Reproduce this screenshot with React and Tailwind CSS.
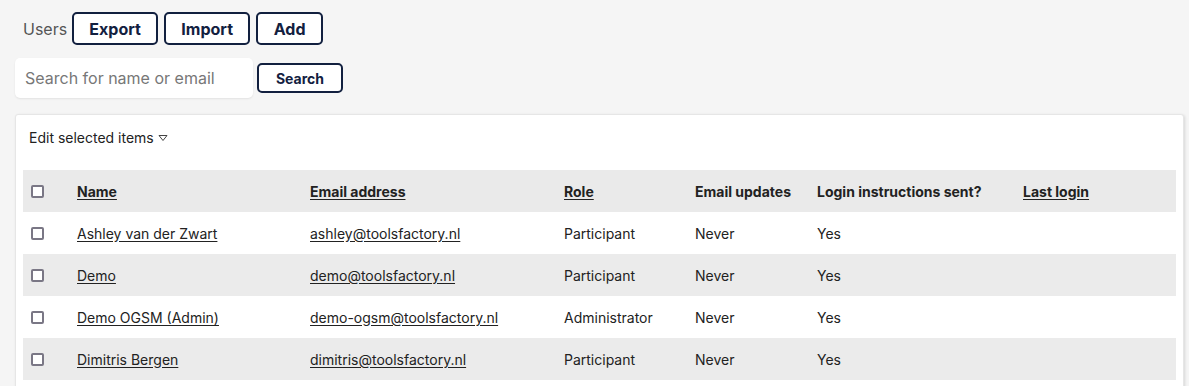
import React from "react";

const rows = [
  { name: "Ashley van der Zwart", email: "ashley@toolsfactory.nl", role: "Participant" },
  { name: "Demo", email: "demo@toolsfactory.nl", role: "Participant" },
  { name: "Demo OGSM (Admin)", email: "demo-ogsm@toolsfactory.nl", role: "Administrator" },
  { name: "Dimitris Bergen", email: "dimitris@toolsfactory.nl", role: "Participant" },
];

function Box() {
  return <span className="block w-[13px] h-[13px] border-2 border-[#7a7785] rounded-[2px] bg-white" />;
}

export default function App() {
  return (
    <div className="min-h-[386px] bg-[#f5f5f5] text-[#222] font-['Inter',sans-serif] pl-[15px] pr-[5px] pt-[12px]">
      <div className="flex items-center h-[33px]">
        <span className="text-[16px] text-[#555] ml-[8px] mr-[5px]">Users</span>
        <div className="flex gap-[6px]">
          <button className="h-[33px] w-[86px] border-2 border-[#12203f] rounded-[5px] text-[16px] font-bold text-[#12203f] bg-white">Export</button>
          <button className="h-[33px] w-[86px] border-2 border-[#12203f] rounded-[5px] text-[16px] font-bold text-[#12203f] bg-white">Import</button>
          <button className="h-[33px] w-[67px] border-2 border-[#12203f] rounded-[5px] text-[16px] font-bold text-[#12203f] bg-white">Add</button>
        </div>
      </div>
      <div className="flex items-center mt-[13px] gap-[4px]">
        <div className="w-[238px] h-[40px] bg-white rounded-[5px] shadow-[0_1px_2px_rgba(0,0,0,0.08)] flex items-center px-[10px] text-[16px] text-[#777]">
          Search for name or email
        </div>
        <button className="h-[30px] w-[86px] border-2 border-[#12203f] rounded-[5px] text-[14px] font-bold text-[#12203f] bg-white">Search</button>
      </div>
      <div className="mt-[16px] w-[1169px] bg-white border border-[#e6e6e6] rounded-[3px] shadow-[1px_1px_3px_rgba(0,0,0,0.12)] px-[7px] pt-[11px] min-h-[280px]">
        <div className="flex items-center text-[14px] ml-[6px] h-[22px] gap-[4px]">
          <span>Edit selected items</span>
          <svg width="10" height="8" viewBox="0 0 10 8" className="mt-[1px]">
            <path d="M1 1.5 H9 L5 6.5 Z" fill="none" stroke="#444" strokeWidth="1" strokeLinejoin="round" />
          </svg>
        </div>
        <table className="mt-[22px] w-[1153px] table-fixed border-collapse text-[14px]">
          <colgroup>
            <col className="w-[46px]" />
            <col className="w-[233px]" />
            <col className="w-[254px]" />
            <col className="w-[131px]" />
            <col className="w-[122px]" />
            <col className="w-[206px]" />
            <col className="w-[161px]" />
          </colgroup>
          <thead>
            <tr className="bg-[#eaeaea] h-[42px] text-left font-bold">
              <th className="pl-[8px]"><Box /></th>
              <th className="pl-[8px]"><span className="underline underline-offset-2">Name</span></th>
              <th className="pl-[8px]"><span className="underline underline-offset-2">Email address</span></th>
              <th className="pl-[8px]"><span className="underline underline-offset-2">Role</span></th>
              <th className="pl-[8px]">Email updates</th>
              <th className="pl-[8px]">Login instructions sent?</th>
              <th className="pl-[8px]"><span className="underline underline-offset-2">Last login</span></th>
            </tr>
          </thead>
          <tbody>
            {rows.map((r, i) => (
              <tr key={r.email} className={"h-[42px] " + (i % 2 === 1 ? "bg-[#ebebeb]" : "bg-white")}>
                <td className="pl-[8px]"><Box /></td>
                <td className="pl-[8px]"><span className="underline underline-offset-2">{r.name}</span></td>
                <td className="pl-[8px]"><span className="underline underline-offset-2">{r.email}</span></td>
                <td className="pl-[8px]">{r.role}</td>
                <td className="pl-[8px]">Never</td>
                <td className="pl-[8px]">Yes</td>
                <td className="pl-[8px]"></td>
              </tr>
            ))}
          </tbody>
        </table>
      </div>
    </div>
  );
}
